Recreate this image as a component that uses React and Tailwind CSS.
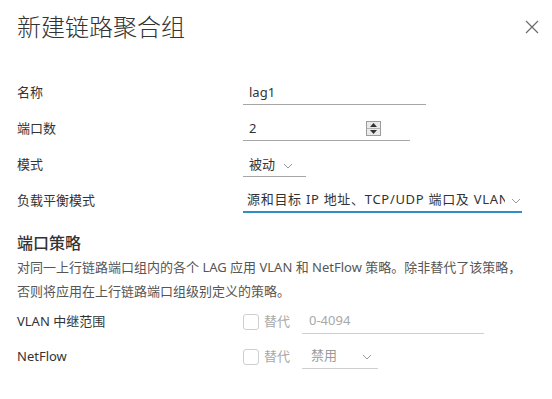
import React from 'react';

const font = { fontFamily: '"Noto Sans", "Noto Sans CJK SC", sans-serif' };

const Chevron = ({ className = '' }) => (
  <svg width="10" height="6" viewBox="0 0 10 6" className={className}>
    <path d="M1 1 L5 5 L9 1" fill="none" stroke="#9a9a9a" strokeWidth="1" />
  </svg>
);

const Spinner = () => (
  <div className="w-[15px] h-[15px] border border-[#9c9c9c] bg-[#eaeaea] flex flex-col">
    <div className="flex-1 flex items-center justify-center border-b border-[#b5b5b5]">
      <svg width="7" height="4" viewBox="0 0 7 4"><path d="M0 4 L3.5 0 L7 4 Z" fill="#333" /></svg>
    </div>
    <div className="flex-1 flex items-center justify-center">
      <svg width="7" height="4" viewBox="0 0 7 4"><path d="M0 0 L3.5 4 L7 0 Z" fill="#333" /></svg>
    </div>
  </div>
);

const Row = ({ label, children, h = 'h-9' }) => (
  <div className={`flex items-center ${h}`}>
    <div className="w-[226px] text-[13px] text-[#333]">{label}</div>
    {children}
  </div>
);

const Checkbox = () => (
  <div className="flex items-center">
    <div className="w-4 h-4 border border-[#cfcfcf] rounded-[3px] bg-white" />
    <span className="ml-[5px] w-[38px] text-[13px] text-[#a8a8a8]">替代</span>
  </div>
);

export default function App() {
  return (
    <div className="w-[552px] h-[399px] bg-white pl-[17px] relative overflow-hidden" style={font}>
      {/* Header */}
      <div className="flex items-center justify-between pt-[11px] pr-[12px]">
        <h1 className="text-[24px] leading-8 font-light text-[#333]">新建链路聚合组</h1>
        <svg width="16" height="16" viewBox="0 0 16 16">
          <path d="M2 2 L14 14 M14 2 L2 14" stroke="#6b6b6b" strokeWidth="1.2" fill="none" />
        </svg>
      </div>

      {/* Form */}
      <div className="mt-[32px]">
        <Row label="名称">
          <div className="w-[183px] h-6 border-b border-[#a6a6a6] pl-[6px] text-[13px] text-[#333] flex items-center">lag1</div>
        </Row>
        <Row label="端口数">
          <div className="w-[167px] h-6 border-b border-[#a6a6a6] pl-[6px] pr-[29px] text-[13px] text-[#333] flex items-center justify-between">
            <span>2</span>
            <Spinner />
          </div>
        </Row>
        <Row label="模式">
          <div className="w-[63px] h-6 border-b border-[#a6a6a6] pl-[6px] text-[13px] text-[#333] flex items-center">
            <span>被动</span>
            <Chevron className="ml-[8px] mt-[2px]" />
          </div>
        </Row>
        <Row label="负载平衡模式">
          <div className="w-[279px] h-6 border-b-2 border-[#2f8fc7] pl-[4px] text-[13px] text-[#333] flex items-center">
            <span className="w-[258px] overflow-hidden whitespace-nowrap tracking-[0.7px]">源和目标 IP 地址、TCP/UDP 端口及 VLAN</span>
            <Chevron className="ml-[6px] mt-[2px]" />
          </div>
        </Row>
      </div>

      {/* Port policy */}
      <div className="mt-[12px]">
        <h2 className="text-[16px] leading-6 font-medium text-[#333]">端口策略</h2>
        <p className="text-[13px] leading-6 text-[#565656] whitespace-nowrap">
          对同一上行链路端口组内的各个 LAG 应用 VLAN 和 NetFlow 策略。除非替代了该策略，
          <br />
          否则将应用在上行链路端口组级别定义的策略。
        </p>
      </div>

      <div className="mt-[1px]">
        <Row label="VLAN 中继范围" h="h-[35px]">
          <Checkbox />
          <div className="w-[182px] h-6 border-b border-[#cfcfcf] pl-[7px] text-[13px] text-[#a8a8a8] flex items-center">0-4094</div>
        </Row>
        <Row label="NetFlow" h="h-[35px]">
          <Checkbox />
          <div className="w-[76px] h-6 border-b border-[#cfcfcf] pl-[9px] text-[13px] text-[#9a9a9a] flex items-center">
            <span>禁用</span>
            <Chevron className="ml-[25px] mt-[2px]" />
          </div>
        </Row>
      </div>
    </div>
  );
}
